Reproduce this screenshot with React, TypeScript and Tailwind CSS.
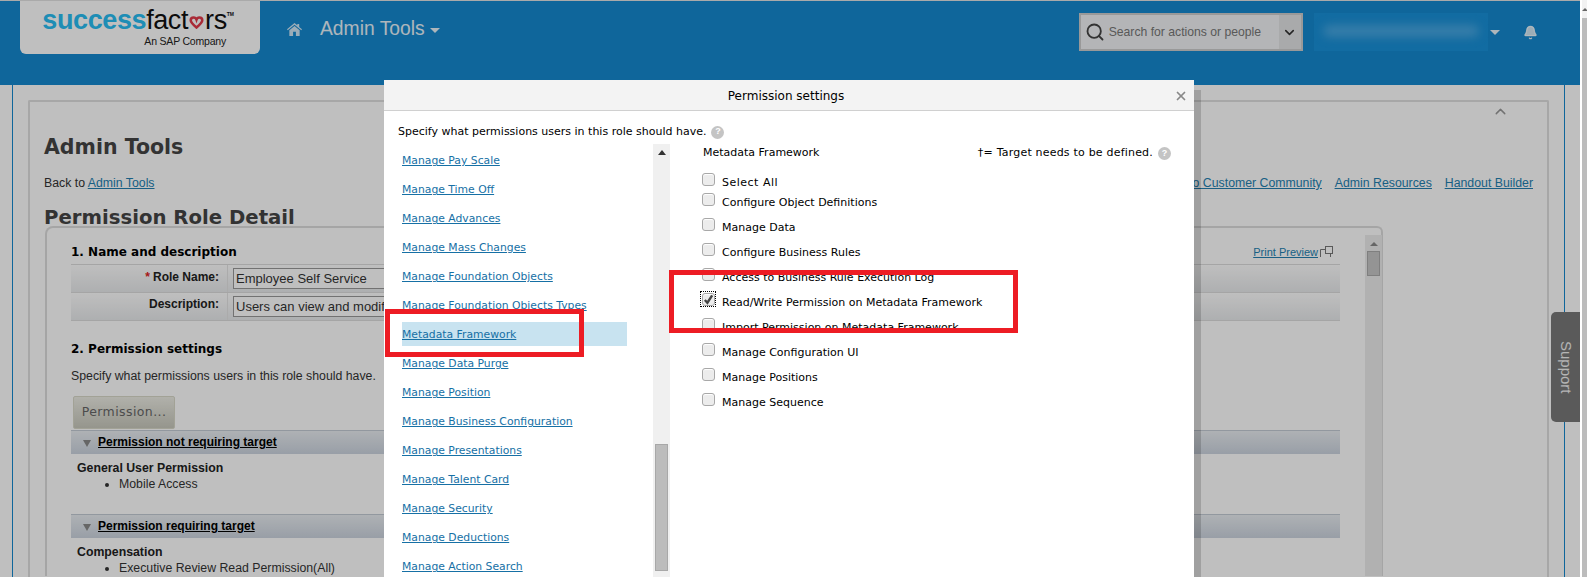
import React from "react";
import { ChevronDown, ChevronUp, Bell, Search, X } from "lucide-react";

const permissionLinks = [
  "Manage Pay Scale",
  "Manage Time Off",
  "Manage Advances",
  "Manage Mass Changes",
  "Manage Foundation Objects",
  "Manage Foundation Objects Types",
  "Metadata Framework",
  "Manage Data Purge",
  "Manage Position",
  "Manage Business Configuration",
  "Manage Presentations",
  "Manage Talent Card",
  "Manage Security",
  "Manage Deductions",
  "Manage Action Search",
];

const frameworkPermissions = [
  "Configure Object Definitions",
  "Manage Data",
  "Configure Business Rules",
  "Access to Business Rule Execution Log",
  "Read/Write Permission on Metadata Framework",
  "Import Permission on Metadata Framework",
  "Manage Configuration UI",
  "Manage Positions",
  "Manage Sequence",
];

const tahoma = "font-['DejaVu_Sans',sans-serif]";
const arial = "font-['Liberation_Sans',Arial,sans-serif]";

function Help() {
  return (
    <span className={`inline-flex h-[13px] w-[13px] items-center justify-center rounded-full bg-[#c4c4c4] text-[9px] font-bold text-white ${arial}`}>
      ?
    </span>
  );
}

function Box({ checked }: { checked?: boolean }) {
  return (
    <span className={`mt-[-2px] flex h-[14px] w-[14px] shrink-0 items-center justify-center ${checked ? "outline-1 outline-dotted outline-black" : ""}`}>
      <span className="flex h-[13px] w-[13px] items-center justify-center rounded-[3px] border border-[#a8a8a8] bg-[#ececec] shadow-[inset_0_1px_1px_#fff]">
        {checked && (
          <svg viewBox="0 0 12 12" className="h-[11px] w-[11px]" fill="none" stroke="#444" strokeWidth="2.6">
            <path d="M2 6.5 L4.8 9.5 L10 1.5" />
          </svg>
        )}
      </span>
    </span>
  );
}

function Caret({ className }: { className: string }) {
  return <span className={`h-0 w-0 border-x-[5px] border-t-[5px] border-x-transparent ${className}`} />;
}

function SectionBar({ title }: { title: string }) {
  return (
    <div className="flex h-[24px] items-center border-t border-[#c3cbd5] bg-linear-to-b from-[#e9edf1] to-[#ccd4df] pb-[2px] pl-[12px]">
      <span className="mr-[7px] mt-[3px] h-0 w-0 border-x-[4px] border-t-[7px] border-x-transparent border-t-[#888]" />
      <span className="text-[12px] font-bold text-black underline">{title}</span>
    </div>
  );
}

function FormRow({ label, value, required }: { label: string; value: string; required?: boolean }) {
  return (
    <div className="flex h-[28px] border-b border-[#dddddd] bg-linear-to-b from-[#ffffff] to-[#e8eaec]">
      <div className={`flex w-[157px] items-start justify-end border-r border-[#e5e5e5] pr-[8px] text-[12px] font-bold text-[#222] ${required ? "pt-[3px]" : "pt-[2px]"}`}>
        {required && <span className="mr-[3px] text-[#d22]">*</span>}
        {label}
      </div>
      <div className="flex items-center pl-[5px]">
        <div className="flex h-[21px] w-[300px] items-center border border-[#999] bg-white px-[2px] pt-px text-[13px] text-[#333]">
          {value}
        </div>
      </div>
    </div>
  );
}

function PermissionModal() {
  return (
    <div className={`absolute left-[384px] top-[80px] flex h-[497px] w-[810px] flex-col bg-white shadow-[7px_10px_0_rgba(0,0,0,0.16)] ${tahoma}`}>
      <div className="flex h-[31px] shrink-0 items-center border-b border-[#d0d0d0] bg-[#f3f3f3] pt-[2px]">
        <span className="flex-1 pl-[14px] text-center text-[12px] text-black">Permission settings</span>
        <X size={14} strokeWidth={3} className="mr-[6px] text-[#888]" />
      </div>
      <div className="flex h-[33px] shrink-0 items-center gap-[5px] pl-[14px] pt-[9px] text-[11px] text-black">
        Specify what permissions users in this role should have. <Help />
      </div>
      <div className="flex min-h-0 flex-1">
        <div className="w-[269px] shrink-0 overflow-hidden pl-[18px] pt-px">
          {permissionLinks.map((link) => (
            <div key={link} className="flex h-[29px] items-center">
              <div className={`flex h-[24px] w-[225px] items-center pt-[4px] text-[10.8px] text-[#1670a5] underline ${link === "Metadata Framework" ? "bg-[#c8e3f0]" : ""}`}>
                {link}
              </div>
            </div>
          ))}
        </div>
        <div className="flex w-[17px] shrink-0 flex-col items-center overflow-hidden bg-[#f0f0f0]">
          <span className="mt-[6px] h-0 w-0 shrink-0 border-x-[4px] border-b-[5px] border-x-transparent border-b-[#333]" />
          <span className="mt-[289px] h-[127px] w-[13px] shrink-0 border border-[#a8a8a8] bg-[#bcbcbc]" />
        </div>
        <div className="flex-1 pl-[31px] pr-[23px] text-[11px] text-black">
          <div className="flex h-[17px] items-center justify-between pl-[2px] pt-[2px]">
            <span>Metadata Framework</span>
            <span className="flex items-center gap-[5px] tracking-[0.2px]">
              †= Target needs to be defined. <Help />
            </span>
          </div>
          <div className="mt-[13px] flex h-[20px] items-start gap-[7px]">
            <Box />
            <span className="mt-[1px] tracking-[0.5px]">Select All</span>
          </div>
          {frameworkPermissions.map((permission) => (
            <div key={permission} className="flex h-[25px] items-start gap-[7px]">
              <Box checked={permission.startsWith("Read/Write")} />
              <span className="mt-[1px]">{permission}</span>
            </div>
          ))}
        </div>
      </div>
    </div>
  );
}

export default function App() {
  return (
    <div className={`relative flex h-[577px] w-[1587px] overflow-hidden bg-white ${arial}`}>
      <div className="relative flex w-[1580px] shrink-0 flex-col">
        <div className="h-px bg-[#e3e3e3]" />
        <header className="flex h-[84px] shrink-0 items-start bg-[#1488cf]">
          <div className="ml-[20px] flex h-[53px] w-[240px] flex-col items-end rounded-b-[6px] bg-white pr-[26px]">
            <div className="mt-[4px] flex h-[30px] items-center text-[27px] leading-[30px] tracking-[-0.4px]">
              <span className="font-bold text-[#28bdf2]">success</span>
              <span className="text-[#111]">fact</span>
              <svg viewBox="0 0 20 18" className="mx-px mt-[4px] h-[13px] w-[15px]" fill="none" stroke="#e23a4a" strokeWidth="3.5">
                <path d="M10 16 C4 11 2 8.5 2 6 C2 3.5 4 2 6 2 C8 2 9.5 3.5 10 5 C10.5 3.5 12 2 14 2 C16 2 18 3.5 18 6 C18 8.5 16 11 10 16 Z" />
              </svg>
              <span className="text-[#111]">rs</span>
              <span className="mb-[12px] text-[5px] font-bold tracking-normal text-[#111]">TM</span>
            </div>
            <span className="mr-[8px] text-[10.5px] leading-[12px] tracking-[-0.2px] text-[#222]">An SAP Company</span>
          </div>
          <svg viewBox="0 0 16 15" className="ml-[27px] mt-[21px] h-[15px] w-[15px]" fill="#fff" fillOpacity="0.8">
            <path d="M8 0.5 L11 3 V1.5 H13 V4.7 L16 7.3 L15.2 8.2 L8 2.4 L0.8 8.2 L0 7.3 Z" />
            <path d="M8 3.8 L13.5 8.2 V14.5 H9.5 V10 H6.5 V14.5 H2.5 V8.2 Z" />
          </svg>
          <div className="ml-[18px] mt-[14px] flex items-center gap-[5px] text-[19.3px] leading-[28px] text-white/90">
            Admin Tools <Caret className="mt-[2px] border-t-white/90" />
          </div>
          <div className="ml-[639px] mt-[12px] flex h-[38px] w-[224px] items-center border-2 border-[#ccc] bg-[#f0f2f4]">
            <Search size={20} strokeWidth={2.2} className="ml-[4px] text-[#444]" />
            <span className="ml-[4px] flex-1 text-[12.2px] text-[#777]">Search for actions or people</span>
            <span className="flex h-full w-[22px] items-center justify-center bg-[#e2e3e4]">
              <ChevronDown size={15} strokeWidth={2.5} className="text-[#333]" />
            </span>
          </div>
          <div className="ml-[11px] mt-[12px] h-[38px] w-[174px] bg-[#1890d8] p-[9px]">
            <div className="mt-[3px] h-[12px] w-[156px] rounded-full bg-[#4aa8e2] blur-[5px]" />
          </div>
          <Caret className="ml-[2px] mt-[29px] border-t-white/90" />
          <Bell size={15} fill="currentColor" className="ml-[23px] mt-[24px] text-white/80" />
        </header>
        <div className="ml-[12px] mr-[15px] min-h-0 flex-1 border-x border-[#1488cf] px-[15px] pt-[15px]">
          <div className="h-[600px] rounded-t-[2px] border-x-2 border-t-2 border-[#dfdfdf] pl-[14px]">
            <div className="flex h-[18px] items-center justify-end pr-[38px]">
              <ChevronUp size={17} className="text-[#999]" />
            </div>
            <h1 className={`mt-[15px] text-[20.5px] font-bold leading-[24px] text-[#444] ${tahoma}`}>Admin Tools</h1>
            <div className="mt-[17px] flex justify-between pr-[14px] text-[12.3px] leading-[14px] text-[#333]">
              <span>
                Back to <a className="text-[#237fb1] underline">Admin Tools</a>
              </span>
              <span className="flex gap-[13px] text-[#237fb1] underline">
                <a>Go to Customer Community</a>
                <a>Admin Resources</a>
                <a>Handout Builder</a>
              </span>
            </div>
            <h2 className={`mt-[20px] text-[19.7px] font-bold leading-[16px] text-[#444] ${tahoma}`}>Permission Role Detail</h2>
            <div className="ml-px flex w-[1338px] rounded-tl-[8px] rounded-tr-[6px] border-r-2 border-l-2 border-t-2 border-[#dddddd] pl-[24px]">
              <div className="w-[1269px] shrink-0">
                <div className="flex h-[36px] items-center justify-between pr-[7px] pt-[12px]">
                  <span className={`text-[12px] font-bold text-black ${tahoma}`}>1. Name and description</span>
                  <span className="flex items-center text-[11px] text-[#237fb1] underline">
                    Print Preview
                    <svg viewBox="0 0 13 12" className="ml-[2px] h-[12px] w-[13px]" fill="none" stroke="#777" strokeWidth="1">
                      <rect x="5.5" y="0.5" width="7" height="7" fill="#fff" />
                      <path d="M5.5 3.5 H0.5 V11 M10.5 7.5 V11" />
                    </svg>
                  </span>
                </div>
                <div className="border-t border-[#dddddd]">
                  <FormRow label="Role Name:" value="Employee Self Service" required />
                  <FormRow label="Description:" value="Users can view and modify" />
                </div>
                <div className={`mt-[19px] text-[12px] font-bold leading-[18px] text-black ${tahoma}`}>2. Permission settings</div>
                <div className="mt-[11px] text-[12.3px] leading-[14px] text-[#333]">Specify what permissions users in this role should have.</div>
                <button className={`ml-[2px] mt-[13px] block h-[33px] w-[102px] rounded-[2px] border border-[#d8d8c8] bg-linear-to-b from-[#ecece4] to-[#c8c8bc] text-[12.5px] tracking-[0.4px] text-[#666] ${tahoma}`}>
                  Permission...
                </button>
                <div className="mt-px">
                  <SectionBar title="Permission not requiring target" />
                  <div className="h-[60px] pl-[6px] pt-[6px] text-[12.3px] leading-[16px] text-[#222]">
                    <div className="font-bold">General User Permission</div>
                    <ul className="ml-[42px] list-disc">
                      <li className="text-[#333]">Mobile Access</li>
                    </ul>
                  </div>
                  <SectionBar title="Permission requiring target" />
                  <div className="pl-[6px] pt-[6px] text-[12.3px] leading-[16px] text-[#222]">
                    <div className="font-bold">Compensation</div>
                    <ul className="ml-[42px] list-disc">
                      <li className="text-[#333]">Executive Review Read Permission(All)</li>
                    </ul>
                  </div>
                </div>
              </div>
              <div className="ml-[25px] mt-[7px] flex w-[17px] shrink-0 flex-col items-center bg-[#ececec] pt-[7px]">
                <span className="h-0 w-0 border-x-[4px] border-b-[4px] border-x-transparent border-b-[#888]" />
                <span className="mt-[5px] h-[25px] w-[13px] border border-[#aaa] bg-[#c6c6c6]" />
              </div>
            </div>
          </div>
        </div>
        <div className="absolute left-[1551px] top-[312px] flex h-[110px] w-[29px] items-center justify-center rounded-l-[5px] bg-[#787878]">
          <span className="rotate-90 text-[15px] text-white/90">Support</span>
        </div>
        <div className="absolute inset-0 bg-black/25" />
        <PermissionModal />
        <div className="absolute left-[385px] top-[309px] h-[48px] w-[199px] border-[5px] border-[#ed1c24]" />
        <div className="absolute left-[669px] top-[270px] h-[63px] w-[349px] border-[5px] border-[#ed1c24]" />
      </div>
      <div className="ml-[2px] flex flex-1 flex-col bg-[#bcbcbc]">
        <div className="flex h-[18px] items-center justify-center bg-[#f2f2f2]">
          <span className="h-0 w-0 border-x-[3px] border-b-[3px] border-x-transparent border-b-[#666]" />
        </div>
      </div>
    </div>
  );
}
